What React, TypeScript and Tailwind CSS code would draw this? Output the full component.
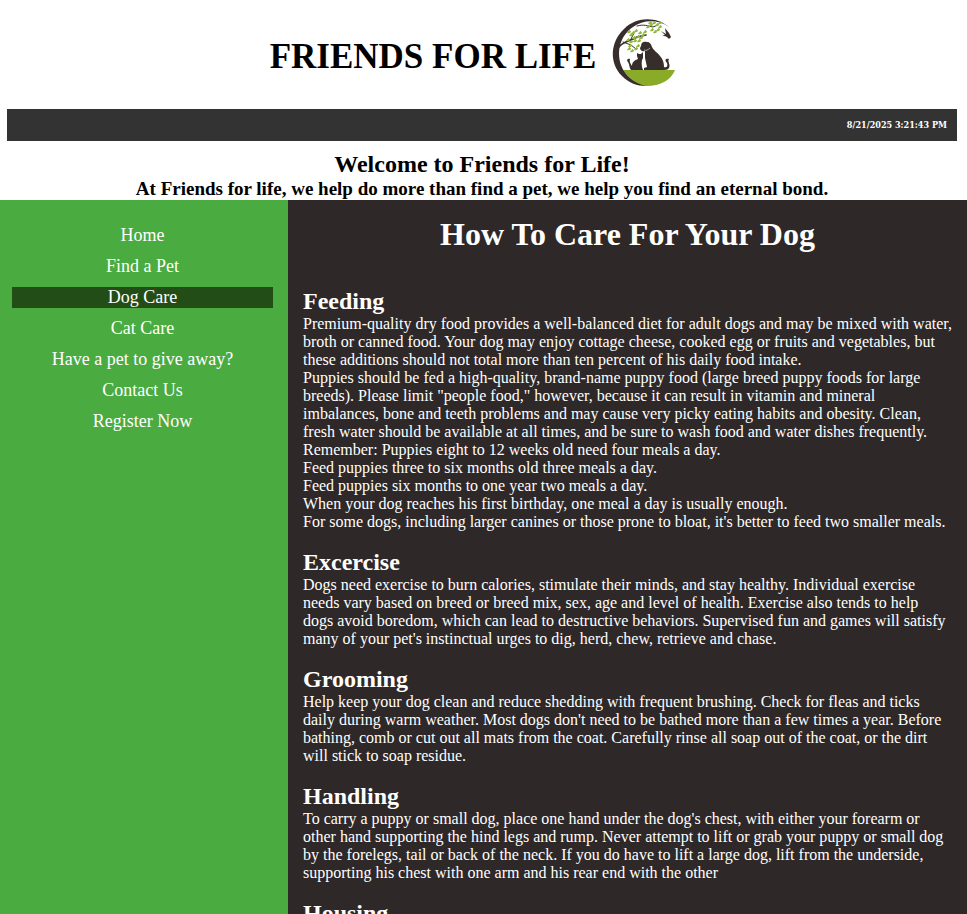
const navItems = [
  'Home',
  'Find a Pet',
  'Dog Care',
  'Cat Care',
  'Have a pet to give away?',
  'Contact Us',
  'Register Now',
];

const sections = [
  {
    title: 'Feeding',
    paragraphs: [
      'Premium-quality dry food provides a well-balanced diet for adult dogs and may be mixed with water, broth or canned food. Your dog may enjoy cottage cheese, cooked egg or fruits and vegetables, but these additions should not total more than ten percent of his daily food intake.',
      'Puppies should be fed a high-quality, brand-name puppy food (large breed puppy foods for large breeds). Please limit "people food," however, because it can result in vitamin and mineral imbalances, bone and teeth problems and may cause very picky eating habits and obesity. Clean, fresh water should be available at all times, and be sure to wash food and water dishes frequently.',
      'Remember: Puppies eight to 12 weeks old need four meals a day.',
      'Feed puppies three to six months old three meals a day.',
      'Feed puppies six months to one year two meals a day.',
      'When your dog reaches his first birthday, one meal a day is usually enough.',
      "For some dogs, including larger canines or those prone to bloat, it's better to feed two smaller meals.",
    ],
  },
  {
    title: 'Excercise',
    paragraphs: [
      "Dogs need exercise to burn calories, stimulate their minds, and stay healthy. Individual exercise needs vary based on breed or breed mix, sex, age and level of health. Exercise also tends to help dogs avoid boredom, which can lead to destructive behaviors. Supervised fun and games will satisfy many of your pet's instinctual urges to dig, herd, chew, retrieve and chase.",
    ],
  },
  {
    title: 'Grooming',
    paragraphs: [
      "Help keep your dog clean and reduce shedding with frequent brushing. Check for fleas and ticks daily during warm weather. Most dogs don't need to be bathed more than a few times a year. Before bathing, comb or cut out all mats from the coat. Carefully rinse all soap out of the coat, or the dirt will stick to soap residue.",
    ],
  },
  {
    title: 'Handling',
    paragraphs: [
      "To carry a puppy or small dog, place one hand under the dog's chest, with either your forearm or other hand supporting the hind legs and rump. Never attempt to lift or grab your puppy or small dog by the forelegs, tail or back of the neck. If you do have to lift a large dog, lift from the underside, supporting his chest with one arm and his rear end with the other",
    ],
  },
  { title: 'Housing', paragraphs: [] },
];

const leaves = [
  [29, 24], [33, 25], [36, 23], [40, 25], [43, 27], [38, 29], [34, 30], [31, 27], [45, 24],
  [28, 32], [31, 34], [35, 33], [39, 33], [29, 41], [32, 43], [36, 41], [38, 38], [30, 38],
  [48, 19], [51, 17], [54, 15], [57, 17], [60, 19], [52, 22], [55, 24], [58, 22], [50, 15], [60, 15], [41, 30],
];

function Logo() {
  return (
    <svg viewBox="0 0 90 90" className="size-[90px]" role="img" aria-label="Friends for Life logo">
      <path d="M23 62H75C71 72 61 78 46 78C37 77 29 71 23 62Z" fill="#8aab27" />
      <path
        d="M69 19C57 9 37 8 24 21C10 34 9 55 22 68C29 75 37 78 46 78C34 75 25 68 21 57C16 42 21 27 33 19C43 12 57 11 69 19Z"
        fill="#372d2b"
      />
      <g fill="none" stroke="#372d2b" strokeLinecap="round">
        <path d="M19 39C23 33 31 33 37 29L46 27" strokeWidth="1.6" />
        <path d="M23 34L31 37L36 41M31 31L34 25M37 18C44 16 48 18 53 19L58 17" strokeWidth="1" />
      </g>
      <g fill="#91b83b">
        {leaves.map(([x, y]) => (
          <path key={`${x}-${y}`} d={`M${x - 2} ${y + 1}q1-3 4-2q0 3-4 2M${x} ${y - 2}q2 0 1 2q-2 0-1-2`} />
        ))}
      </g>
      <g fill="#372d2b">
        <path d="M41 38C41 34 44 33 47 34C50 34 51 36 52 39C53 42 57 44 60 48C63 51 64 55 64 59C67 60 68 58 67 55C64 52 66 50 69 51C67 54 71 56 69 60C68 62 65 62 62 62H44V60L47 59L45 50L45 43C42 44 40 42 40 40Z" />
        <path d="M37 48L37 45L39 46H41L43 44L43 50C41 53 42 57 42 59L43 62H31C29 60 30 57 28 54C26 52 28 50 30 51C29 54 31 56 32 58C32 54 35 52 38 51Z" />
        <path d="M61 23L66 26L65 20L69 25L71 29L69 31L67 29L62 27L65 27Z" />
      </g>
      <path d="M44 42C46 43 48 42 50 40" fill="none" stroke="#c8c3c0" strokeWidth="0.8" />
    </svg>
  );
}

export default function App() {
  return (
    <div className="flex h-screen flex-col overflow-hidden bg-white font-['Liberation_Serif',serif] text-black">
      <header className="pr-[10px] pl-[7px]">
        <div className="flex h-[109px] items-start justify-center gap-1 pt-2 pr-1">
          <span className="pt-[25px] text-[35px] leading-12 font-bold">FRIENDS FOR LIFE</span>
          <Logo />
        </div>
        <div className="flex h-8 items-center justify-end bg-[#333333] pt-0.5 pr-[10px] font-['DejaVu_Serif_Condensed','DejaVu_Serif',serif] text-[9px] font-bold text-white">
          <time>8/21/2025 3:21:43 PM</time>
        </div>
        <div className="pt-[9px] text-center font-bold">
          <p className="text-2xl leading-7">Welcome to Friends for Life!</p>
          <p className="text-[19px] leading-[22px]">
            At Friends for life, we help do more than find a pet, we help you find an eternal bond.
          </p>
        </div>
      </header>
      <div className="flex flex-1">
        <nav className="w-[288px] shrink-0 bg-[#4aab40] pt-[25px] pr-[15px] pl-3">
          <ul className="flex flex-col gap-[10px] text-center text-lg leading-[21px] text-white">
            {navItems.map((item) => (
              <li key={item}>
                <a href="#" className={item === 'Dog Care' ? 'block bg-[#234d16]' : 'block'}>
                  {item}
                </a>
              </li>
            ))}
          </ul>
        </nav>
        <main className="flex-1 bg-[#2e2828] px-[15px] pt-4 text-white">
          <h1 className="text-center text-[32px] leading-9 font-bold">How To Care For Your Dog</h1>
          <div className="flex flex-col gap-[18px] pt-9">
            {sections.map((section) => (
              <section key={section.title}>
                <h2 className="text-2xl leading-[27px] font-bold">{section.title}</h2>
                {section.paragraphs.map((text) => (
                  <p key={text} className="text-base leading-[18px]">
                    {text}
                  </p>
                ))}
              </section>
            ))}
          </div>
        </main>
      </div>
    </div>
  );
}
